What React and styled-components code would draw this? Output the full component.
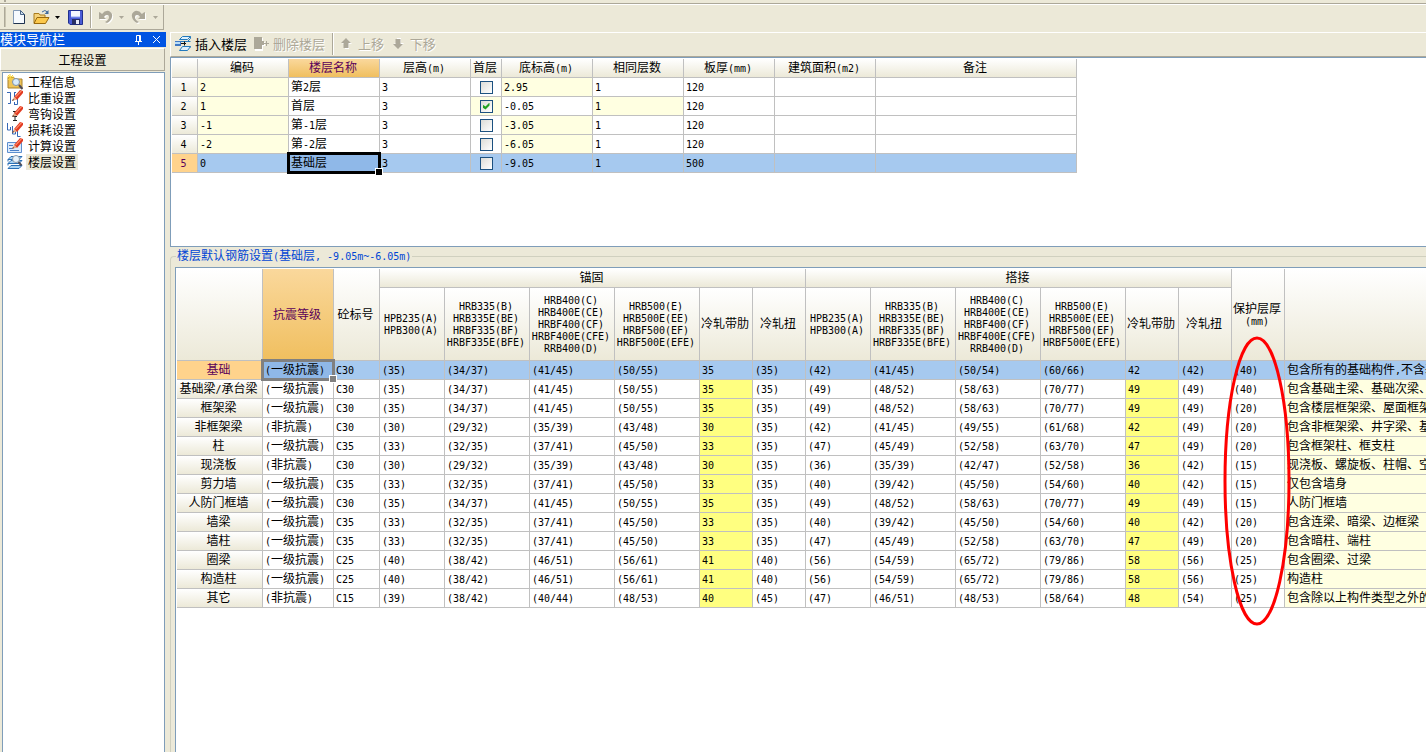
import React from 'react'
import styled, { createGlobalStyle, css } from 'styled-components';

const GlobalStyle = createGlobalStyle`
  * {
    box-sizing: border-box;
  }
  body {
    margin: 0;
    overflow: hidden;
    background: #ece9d8;
    color: #000;
    font-family: "Noto Sans CJK SC", sans-serif;
    font-size: 12px;
    line-height: 16px;
  }
  button {
    font: inherit;
    color: inherit;
    background: none;
    border: none;
    padding: 0;
  }
`;

const Latin = styled.span`
  font-family: "DejaVu Sans Mono", monospace;
  font-size: 10px;
  line-height: 0;
`;

const Page = styled.div`
  display: flex;
  flex-direction: column;
  height: 100vh;
`;

const TopEdge = styled.div`
  flex: none;
  height: 4px;
  padding-left: 4px;
  border-bottom: 1px solid #aca899;
`;

const EdgeGrip = styled.div`
  width: 2px;
  height: 2px;
  background: #aca899;
`;

const TopBar = styled.header`
  flex: none;
  height: 28px;
  border-top: 1px solid #fff;
`;

const FileTools = styled.div`
  display: flex;
  align-items: center;
  width: 164px;
  height: 25px;
  padding-left: 4px;
  border-right: 1px solid #aca899;
  border-bottom: 1px solid #aca899;
`;

const Grip = styled.span`
  width: 2px;
  height: 20px;
  margin-right: 5px;
  border-left: 1px solid #aca899;
  border-right: 1px solid #c9c5b2;
`;

const IconButton = styled.button`
  display: flex;
  justify-content: center;
  width: ${(p) => p.$width}px;
`;

const Separator = styled.span`
  width: 2px;
  height: 22px;
  margin: 0 ${(p) => p.$gap}px;
  border-left: 1px solid #aca899;
  border-right: 1px solid #fff;
`;

const Body = styled.div`
  display: flex;
  flex: 1;
  min-height: 0;
`;

const Sidebar = styled.aside`
  display: flex;
  flex-direction: column;
  flex: none;
  width: 166px;
`;

const TitleBar = styled.div`
  display: flex;
  align-items: center;
  flex: none;
  height: 15px;
  padding-right: 1px;
  background: #0054e3;
  color: #fff;
  font-size: 13px;
  line-height: 13px;
`;

const TitleText = styled.span`
  flex: 1;
  padding-bottom: 2px;
`;

const GroupButton = styled.button`
  flex: none;
  height: 23px;
  margin: 1px 1px 1px 0;
  border: 1px solid;
  border-color: #fff #aca899 #aca899 #fff;
  line-height: 20px;
`;

const Tree = styled.ul`
  flex: 1;
  margin: 0 1px 0 2px;
  padding: 1px 0 0 4px;
  list-style: none;
  background: #fff;
  border: 1px solid #7f9db9;
  border-bottom: none;
`;

const TreeItem = styled.li`
  display: flex;
  height: 16px;
`;

const TreeLink = styled.a`
  margin-left: 3px;
  padding: 0 2px;
  color: #000;
  line-height: 15px;
  text-decoration: none;
  background: ${(p) => (p.$active ? '#ece9d8' : 'transparent')};
`;

const Main = styled.main`
  display: flex;
  flex-direction: column;
  flex: 1;
  min-width: 0;
  margin-left: 4px;
  overflow: hidden;
`;

const FloorTools = styled.div`
  display: flex;
  align-items: center;
  flex: none;
  height: 25px;
  padding: 0 0 2px 4px;
  border-top: 1px solid #fff;
  border-left: 1px solid #fff;
  border-bottom: 1px solid #aca899;
  font-size: 13px;
`;

const ToolButton = styled.button`
  display: flex;
  align-items: center;
  gap: 3px;
  margin-right: ${(p) => p.$after || 0}px;
  white-space: nowrap;
  &:disabled {
    color: #aca899;
    text-shadow: 1px 1px 0 #fff;
  }
`;

const GridBox = styled.div`
  position: relative;
  flex: ${(p) => (p.$fill ? '1' : 'none')};
  height: ${(p) => (p.$fill ? 'auto' : '190px')};
  min-height: 0;
  padding: 1px 0 0 1px;
  overflow: hidden;
  background: #fff;
  border: 1px solid #7f9db9;
  border-right: none;
  border-bottom-width: ${(p) => (p.$fill ? 0 : 1)}px;
`;

const Table = styled.table`
  width: ${(p) => p.$width}px;
  table-layout: fixed;
  border-collapse: separate;
  border-spacing: 0;
  line-height: 16px;
`;

const headFill = css`
  background: ${(p) => (p.$active ? 'linear-gradient(#fad89c, #f0bf5f)' : 'linear-gradient(#fff, #ece9d8)')};
  color: ${(p) => (p.$active ? '#5a005a' : '#000')};
`;

const Head = styled.th`
  height: 19px;
  padding: 0 2px 2px 0;
  border-right: 1px solid #c0c0c0;
  border-bottom: 1px solid #c0c0c0;
  font-weight: normal;
  white-space: nowrap;
  ${headFill}
`;

const SubHead = styled(Head)`
  height: 73px;
  line-height: 12px;
`;

const TallHead = styled(Head)`
  height: 92px;
  line-height: 12px;
`;

const HeadLine = styled.div`
  display: flex;
  justify-content: center;
`;

const RowHead = styled(Head)`
  background: ${(p) => (p.$active ? '#ffd38c' : 'linear-gradient(#fff, #ece9d8)')};
`;

const fills = {
  plain: '#fff',
  cream: '#ffffe1',
  yellow: '#ffff80',
};

const Cell = styled.td`
  position: relative;
  height: 19px;
  padding: 0 0 2px 2px;
  border-right: 1px solid #c0c0c0;
  border-bottom: 1px solid #c0c0c0;
  background: ${(p) => (p.$rowActive ? '#a6c9ef' : fills[p.$fill || 'plain'])};
  white-space: nowrap;
`;

const FocusCell = styled(Cell)`
  z-index: 1;
  background: #8fb8e8;
  &::before {
    content: '';
    position: absolute;
    inset: -2px;
    border: 3px solid ${(p) => p.$frame};
  }
  &::after {
    content: '';
    position: absolute;
    right: -4px;
    bottom: -4px;
    width: 6px;
    height: 6px;
    background: ${(p) => p.$frame};
    border: 1px solid #fff;
  }
`;

const CheckCell = styled(Cell)`
  padding: 0;
`;

const Check = styled.input`
  appearance: none;
  display: block;
  width: 13px;
  height: 13px;
  margin: 0 auto;
  border: 1px solid #1c5180;
  background: linear-gradient(135deg, #dcdcd7, #fff);
  &:checked::before {
    content: '';
    display: block;
    width: 7px;
    height: 7px;
    margin: 2px;
    background: #21a121;
    clip-path: polygon(0 29%, 43% 57%, 100% 0, 100% 43%, 43% 100%, 0 72%);
  }
`;

const Group = styled.fieldset`
  display: flex;
  flex-direction: column;
  flex: 1;
  min-width: 0;
  min-height: 0;
  margin: 0;
  padding: 2px 0 0 4px;
  border: 1px solid #d0d0bf;
  border-right: none;
  border-bottom: none;
  border-radius: 4px 0 0 0;
`;

const Legend = styled.legend`
  margin-left: 1px;
  padding: 0 1px 2px;
  color: #0046d5;
  line-height: 16px;
`;

const Marker = styled.svg`
  position: absolute;
  left: 1046px;
  top: 68px;
`;

// ASCII runs take the narrow fixed-width face, everything else the CJK one
const Text = ({ children }) =>
  String(children)
    .split(/([\x20-\x7e]+)/)
    .filter(Boolean)
    .map((part, i) => (/^[\x20-\x7e]/.test(part) ? <Latin key={i}>{part}</Latin> : part));

const Lines = ({ of }) => of.split('\n').map((line) => (
  <HeadLine key={line}><span><Text>{line}</Text></span></HeadLine>
));

const NewIcon = () => (
  <svg width="14" height="16" viewBox="0 0 14 16">
    <path d="M1.5 1.5h7l4 4v9h-11z" fill="#f6fafe" stroke="#8299b5" />
    <path d="M12.5 5v9.5h-11" fill="none" stroke="#20334f" />
    <path d="M8.5 1.5v4h4z" fill="#cfe0f2" stroke="#4a6586" />
  </svg>
);

const OpenIcon = () => (
  <svg width="17" height="16" viewBox="0 0 17 16">
    <path d="M1 14V4.500h5l1 1.500h5v3" fill="#f5d27a" stroke="#a97b1d" />
    <path d="M1 14.500l3-6h12l-3.500 6z" fill="#fbc84c" stroke="#99690d" />
    <path d="M9 3q3-3 5.500 0" fill="none" stroke="#3e699c" />
    <path d="M15.500 1v4h-4z" fill="#3e699c" />
  </svg>
);

const SaveIcon = () => (
  <svg width="15" height="15" viewBox="0 0 15 15">
    <path d="M.5.5h14v14H2l-1.500-1.500z" fill="#4a5cd6" stroke="#20308e" />
    <path d="M3 1h9v6H3z" fill="#f4f6ff" />
    <path d="M4 9h8v5.500H4z" fill="#272f63" />
    <path d="M8 10h3v4H8z" fill="#e8ebf8" />
    <path d="M3 7h9" stroke="#8fa5f0" />
  </svg>
);

const Caret = ({ off }) => (
  <svg width="5" height="3" viewBox="0 0 5 3">
    <path d="M0 0h5L2.500 3z" fill={off ? '#aca899' : '#000'} />
  </svg>
);

const undoShape = 'M1 2l2 1 1 1q3-4 7-3 4 2 3 6-1 4-5 6l-2-1q4-2 4-5 0-2-2-2-2 0-3 2l2 2H1z';

const UndoIcon = ({ flip }) => (
  <svg width="16" height="15" viewBox="0 0 16 15">
    <g transform={flip ? 'matrix(-1 0 0 1 15 0)' : undefined}>
      <path d={undoShape} fill="#fff" transform={flip ? 'translate(-1 1)' : 'translate(1 1)'} />
      <path d={undoShape} fill="#aca899" />
    </g>
  </svg>
);

const PinIcon = () => (
  <svg width="9" height="11" viewBox="0 0 9 11">
    <path d="M2.500 7V1.500h4V7M1 7.500h7M4.500 8v3M5.500 1v6" fill="none" stroke="#fff" />
  </svg>
);

const CloseIcon = () => (
  <svg width="9" height="9" viewBox="0 0 9 9">
    <path d="M1 1l7 7M8 1L1 8" stroke="#fff" />
  </svg>
);

const Pencil = () => (
  <>
    <path d="M7 7l6-7 3 1v2l-6 7z" fill="#e23b22" />
    <path d="M8 7l6-6.500 1 .5-6 6.500z" fill="#ff8f70" />
    <path d="M5 11l2-4 3 2.500z" fill="#e6a883" />
    <path d="M5 11l1-2 1 1z" fill="#3a2a2a" />
  </>
);

const treeIcons = {
  info: (
    <>
      <path d="M1 3.500h6l1 1.500h7v9H1z" fill="#f0c558" stroke="#a9812a" />
      <path d="M3 0v7M0 3h7M1 1l5 5M6 1L1 6" stroke="#f7d238" />
      <circle cx="9" cy="8" r="3.500" fill="#d8ebfa" stroke="#7d92ab" />
      <path d="M12 11l3.500 4" stroke="#4e4b58" strokeWidth="2" />
    </>
  ),
  weight: (
    <>
      <path d="M0 2.500h3.500v11H1M7 2.500h2M7.500 3v4M7 14.500h3.500V9M7.500 12v2" fill="none" stroke="#3567b5" />
      <Pencil />
    </>
  ),
  hook: (
    <>
      <path d="M6 5.500h4M8 6v8M6 10.500h4M6 14.500h4" fill="none" stroke="#222" />
      <Pencil />
    </>
  ),
  loss: (
    <>
      <path d="M.5 1v7h3V5M5.500 4v8h3V9M10.500 9v5.500h3" fill="none" stroke="#3567b5" />
      <Pencil />
    </>
  ),
  calc: (
    <>
      <path d="M.5 4.500h14v10H.5z" fill="#dcebfb" stroke="#5c8fcf" />
      <path d="M2 7.500h4M2 10.500h3M3 12.500h9" stroke="#4a80c8" />
      <Pencil />
    </>
  ),
  floor: (
    <>
      <path d="M4 2.500h11l-3 3H1zM4 6.500h11l-3 3H1zM4 11.500h11l-3 3H1z" fill="#a9d3f3" stroke="#2a6fb4" />
      <path d="M1 5.500v2M1 9.500v2" stroke="#2a6fb4" />
      <circle cx="9" cy="5" r="3.500" fill="#e7f3fc" stroke="#8a98a8" />
      <path d="M11.500 8l3 3.500" stroke="#50505c" strokeWidth="2" />
    </>
  ),
};

const TreeIcon = ({ name }) => (
  <svg width="16" height="16" viewBox="0 0 16 16">{treeIcons[name]}</svg>
);

const InsertIcon = () => (
  <svg width="17" height="17" viewBox="0 0 17 17">
    <path d="M7.500 1.500h8l-3 3h-8z" fill="#dff1fd" stroke="#2379bd" />
    <path d="M7.500 11.500h8l-3 4h-8z" fill="#dff1fd" stroke="#2379bd" />
    <path d="M15.500 1.500v2l-3 3h-7M15.500 6.500h-3M15.500 11.500v1" fill="none" stroke="#2379bd" />
    <path d="M0 6h6v5H0z" fill="#3f78c4" />
    <path d="M0 7h5v2H0z" fill="#b9dcf7" />
    <path d="M6 8.500h5M9.500 6.500v4" fill="none" stroke="#111" />
  </svg>
);

const DeleteIcon = () => (
  <svg width="16" height="15" viewBox="1 0 16 15">
    <path d="M2 2h8v4h2v4h-2v5H2z" fill="#fff" />
    <path d="M1 1h8v4h2v4H9v4H1z" fill="#aca899" />
    <path d="M10 7.500h6M13.500 5v5" stroke="#aca899" />
  </svg>
);

const ArrowIcon = ({ down }) => (
  <svg width="11" height="11" viewBox="0 0 11 11">
    <g transform={down ? 'matrix(1 0 0 -1 0 11)' : undefined}>
      <path d="M6 1l5 5H8v5H4V6H1z" fill="#fff" />
      <path d="M5 0l5 5H7.500v5h-5V5H0z" fill="#aca899" />
    </g>
  </svg>
);

const navItems = [
  ['info', '工程信息'],
  ['weight', '比重设置'],
  ['hook', '弯钩设置'],
  ['loss', '损耗设置'],
  ['calc', '计算设置'],
  ['floor', '楼层设置'],
];

const floorCols = [26, 91, 91, 91, 31, 91, 91, 91, 101, 201];
const floorHeads = ['编码', '楼层名称', '层高(m)', '首层', '底标高(m)', '相同层数', '板厚(mm)', '建筑面积(m2)', '备注'];

const floors = [
  { code: '2', name: '第2层', height: '3', base: '2.95', same: '1', slab: '120' },
  { code: '1', name: '首层', height: '3', first: true, base: '-0.05', same: '1', slab: '120' },
  { code: '-1', name: '第-1层', height: '3', base: '-3.05', same: '1', slab: '120' },
  { code: '-2', name: '第-2层', height: '3', base: '-6.05', same: '1', slab: '120' },
  { code: '0', name: '基础层', height: '3', base: '-9.05', same: '1', slab: '500' },
];

const rebarCols = [86, 71, 46, 65, 85, 85, 85, 53, 53, 65, 85, 85, 85, 53, 53, 53, 400];

const rebarHeads = [
  'HPB235(A)\nHPB300(A)',
  'HRB335(B)\nHRB335E(BE)\nHRBF335(BF)\nHRBF335E(BFE)',
  'HRB400(C)\nHRB400E(CE)\nHRBF400(CF)\nHRBF400E(CFE)\nRRB400(D)',
  'HRB500(E)\nHRB500E(EE)\nHRBF500(EF)\nHRBF500E(EFE)',
  '冷轧带肋',
  '冷轧扭',
];

// name | seismic grade | concrete | anchorage x6 | lap x6 | cover | note
const rebarRows = `
基础|(一级抗震)|C30|(35)|(34/37)|(41/45)|(50/55)|35|(35)|(42)|(41/45)|(50/54)|(60/66)|42|(42)|(40)|包含所有的基础构件,不含基
基础梁/承台梁|(一级抗震)|C30|(35)|(34/37)|(41/45)|(50/55)|35|(35)|(49)|(48/52)|(58/63)|(70/77)|49|(49)|(40)|包含基础主梁、基础次梁、
框架梁|(一级抗震)|C30|(35)|(34/37)|(41/45)|(50/55)|35|(35)|(49)|(48/52)|(58/63)|(70/77)|49|(49)|(20)|包含楼层框架梁、屋面框架
非框架梁|(非抗震)|C30|(30)|(29/32)|(35/39)|(43/48)|30|(35)|(42)|(41/45)|(49/55)|(61/68)|42|(49)|(20)|包含非框架梁、井字梁、基
柱|(一级抗震)|C35|(33)|(32/35)|(37/41)|(45/50)|33|(35)|(47)|(45/49)|(52/58)|(63/70)|47|(49)|(20)|包含框架柱、框支柱
现浇板|(非抗震)|C30|(30)|(29/32)|(35/39)|(43/48)|30|(35)|(36)|(35/39)|(42/47)|(52/58)|36|(42)|(15)|现浇板、螺旋板、柱帽、空
剪力墙|(一级抗震)|C35|(33)|(32/35)|(37/41)|(45/50)|33|(35)|(40)|(39/42)|(45/50)|(54/60)|40|(42)|(15)|仅包含墙身
人防门框墙|(一级抗震)|C30|(35)|(34/37)|(41/45)|(50/55)|35|(35)|(49)|(48/52)|(58/63)|(70/77)|49|(49)|(15)|人防门框墙
墙梁|(一级抗震)|C35|(33)|(32/35)|(37/41)|(45/50)|33|(35)|(40)|(39/42)|(45/50)|(54/60)|40|(42)|(20)|包含连梁、暗梁、边框梁
墙柱|(一级抗震)|C35|(33)|(32/35)|(37/41)|(45/50)|33|(35)|(47)|(45/49)|(52/58)|(63/70)|47|(49)|(20)|包含暗柱、端柱
圈梁|(一级抗震)|C25|(40)|(38/42)|(46/51)|(56/61)|41|(40)|(56)|(54/59)|(65/72)|(79/86)|58|(56)|(25)|包含圈梁、过梁
构造柱|(一级抗震)|C25|(40)|(38/42)|(46/51)|(56/61)|41|(40)|(56)|(54/59)|(65/72)|(79/86)|58|(56)|(25)|构造柱
其它|(非抗震)|C15|(39)|(38/42)|(40/44)|(48/53)|40|(45)|(47)|(46/51)|(48/53)|(58/64)|48|(54)|(25)|包含除以上构件类型之外的
`.trim().split('\n').map((line) => line.split('|'));

const sum = (list) => list.reduce((a, b) => a + b, 0);

const Cols = ({ widths }) => (
  <colgroup>
    {widths.map((w, i) => <col key={i} width={w} />)}
  </colgroup>
);

const FloorTable = () => (
  <Table $width={sum(floorCols)}>
    <Cols widths={floorCols} />
    <thead>
      <tr>
        <Head />
        {floorHeads.map((h) => <Head key={h} $active={h === '楼层名称'}><Text>{h}</Text></Head>)}
      </tr>
    </thead>
    <tbody>
      {floors.map((f, i) => {
        const on = i === 4;
        return (
          <tr key={f.code}>
            <RowHead $active={on}><Text>{i + 1}</Text></RowHead>
            <Cell $rowActive={on} $fill="cream"><Text>{f.code}</Text></Cell>
            {on
              ? <FocusCell $frame="#000"><Text>{f.name}</Text></FocusCell>
              : <Cell><Text>{f.name}</Text></Cell>}
            <Cell $rowActive={on}><Text>{f.height}</Text></Cell>
            <CheckCell $rowActive={on} $fill={f.first ? 'cream' : 'plain'}>
              <Check type="checkbox" aria-label={f.name} defaultChecked={f.first} />
            </CheckCell>
            <Cell $rowActive={on} $fill={f.first ? 'plain' : 'cream'}><Text>{f.base}</Text></Cell>
            <Cell $rowActive={on} $fill={f.first ? 'cream' : 'plain'}><Text>{f.same}</Text></Cell>
            <Cell $rowActive={on}><Text>{f.slab}</Text></Cell>
            <Cell $rowActive={on} />
            <Cell $rowActive={on} />
          </tr>
        );
      })}
    </tbody>
  </Table>
);

const fillFor = (col) => {
  if (col === 7 || col === 13) return 'yellow';
  return col === 16 ? 'cream' : 'plain';
};

const RebarTable = () => (
  <Table $width={sum(rebarCols)}>
    <Cols widths={rebarCols} />
    <thead>
      <tr>
        <TallHead rowSpan={2} />
        <TallHead rowSpan={2} $active>抗震等级</TallHead>
        <TallHead rowSpan={2}>砼标号</TallHead>
        <Head colSpan={6}>锚固</Head>
        <Head colSpan={6}>搭接</Head>
        <TallHead rowSpan={2}><Lines of={'保护层厚\n(mm)'} /></TallHead>
        <TallHead rowSpan={2} />
      </tr>
      <tr>
        {[...rebarHeads, ...rebarHeads].map((h, i) => <SubHead key={i}><Lines of={h} /></SubHead>)}
      </tr>
    </thead>
    <tbody>
      {rebarRows.map(([name, ...values], r) => (
        <tr key={name}>
          <RowHead $active={r === 0}><Text>{name}</Text></RowHead>
          {values.map((v, i) => (r === 0 && i === 0
            ? <FocusCell key={i} $frame="#808080"><Text>{v}</Text></FocusCell>
            : <Cell key={i} $rowActive={r === 0} $fill={fillFor(i + 1)}><Text>{v}</Text></Cell>
          ))}
        </tr>
      ))}
    </tbody>
  </Table>
);

const App = () => {
  return (
    <>
      <GlobalStyle />
      <Page>
        <TopEdge><EdgeGrip /></TopEdge>
        <TopBar>
          <FileTools>
            <Grip />
            <IconButton $width={16} aria-label="新建"><NewIcon /></IconButton>
            <IconButton $width={28} aria-label="打开"><OpenIcon /></IconButton>
            <IconButton $width={5} aria-label="打开列表"><Caret /></IconButton>
            <IconButton $width={30} aria-label="保存"><SaveIcon /></IconButton>
            <Separator $gap={0} />
            <IconButton $width={27} disabled aria-label="撤销"><UndoIcon /></IconButton>
            <IconButton $width={5} disabled aria-label="撤销列表"><Caret off /></IconButton>
            <IconButton $width={29} disabled aria-label="恢复"><UndoIcon flip /></IconButton>
            <IconButton $width={5} disabled aria-label="恢复列表"><Caret off /></IconButton>
          </FileTools>
        </TopBar>
        <Body>
          <Sidebar>
            <TitleBar>
              <TitleText>模块导航栏</TitleText>
              <IconButton $width={18} aria-label="固定"><PinIcon /></IconButton>
              <IconButton $width={18} aria-label="关闭"><CloseIcon /></IconButton>
            </TitleBar>
            <GroupButton>工程设置</GroupButton>
            <Tree>
              {navItems.map(([icon, label]) => (
                <TreeItem key={icon}>
                  <TreeIcon name={icon} />
                  <TreeLink href="#" $active={icon === 'floor'}>{label}</TreeLink>
                </TreeItem>
              ))}
            </Tree>
          </Sidebar>
          <Main>
            <FloorTools>
              <ToolButton $after={7}><InsertIcon />插入楼层</ToolButton>
              <ToolButton disabled><DeleteIcon />删除楼层</ToolButton>
              <Separator $gap={7} />
              <ToolButton disabled $after={9}><ArrowIcon /><span>&nbsp;上移</span></ToolButton>
              <ToolButton disabled><ArrowIcon down /><span>&nbsp;下移</span></ToolButton>
            </FloorTools>
            <GridBox>
              <FloorTable />
            </GridBox>
            <Group>
              <Legend><Text>楼层默认钢筋设置(基础层, -9.05m~-6.05m)</Text></Legend>
              <GridBox $fill>
                <RebarTable />
                <Marker width="70" height="292" viewBox="0 0 70 292">
                  <ellipse cx="35" cy="145" rx="32" ry="143" fill="none" stroke="#f00" strokeWidth="3" />
                </Marker>
              </GridBox>
            </Group>
          </Main>
        </Body>
      </Page>
    </>
  );
};

export default App;
